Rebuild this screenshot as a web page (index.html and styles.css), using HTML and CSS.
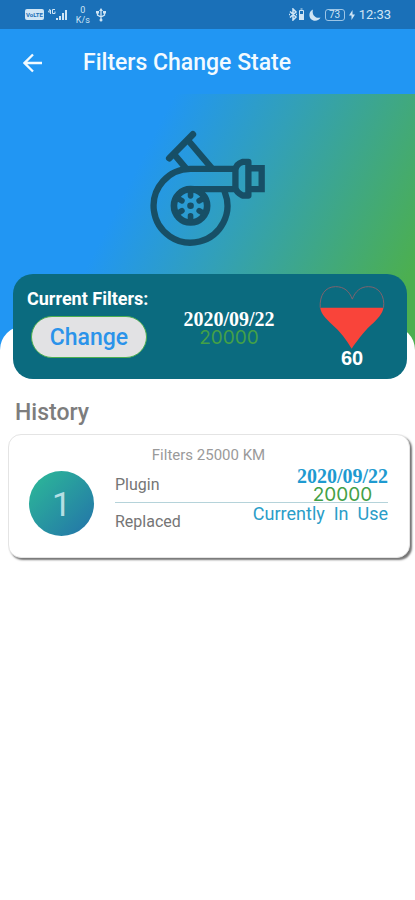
FILE: index.html
```html
<!DOCTYPE html>
<html lang="en">
<head>
<meta charset="utf-8">
<meta name="viewport" content="width=device-width, initial-scale=1">
<title>Filters Change State</title>
<link rel="stylesheet" href="styles.css">
</head>
<body>
<div class="status">
  <div class="status-group">
    <span class="volte">VoLTE</span>
    <svg class="signal" viewBox="0 0 20 13" width="20" height="13" aria-hidden="true">
      <path d="M2 1L0.500 4H3M2.500 2V6M7 1.500H4.500V5.500H7V3.500" fill="none" stroke="currentColor"/>
      <path d="M8 12V10H10V12ZM11 12V8H13V12ZM14 12V5H16V12ZM17 12V2H19V12Z" fill="currentColor"/>
    </svg>
    <span class="speed"><span>0</span><span>K/s</span></span>
    <svg class="usb" viewBox="0 0 10 14" width="10" height="14" aria-hidden="true">
      <path d="M5 2V12M1.500 4V7L5 9L8.500 7V4" fill="none" stroke="currentColor" stroke-width="1.300"/>
      <path d="M5 0L7 3H3ZM0 3H3V5.500H0ZM7 3H10V5.500H7Z" fill="currentColor"/><circle cx="5" cy="12" r="1.500" fill="currentColor"/>
    </svg>
  </div>
  <div class="status-group right">
    <svg viewBox="0 0 17 13" width="17" height="13" aria-hidden="true">
      <path d="M2 3.500L8 9L5 12V1L8 4L2 9.500M1 6.500H2M8 6.500H9" fill="none" stroke="currentColor" stroke-width="1.500"/>
      <path d="M11.500 2.500H15.500V11.500H11.500ZM12.500 1H14.500" fill="none" stroke="currentColor"/><path d="M11 6H16V12H11Z" fill="currentColor"/>
    </svg>
    <svg viewBox="0 0 12 12" width="12" height="12" aria-hidden="true">
      <path d="M4 0.500C-0.500 2.500 -0.500 8 2.500 10.500C5.500 13 10.500 11.500 11.500 8.500C6.500 10 2.500 5.500 4 0.500Z" fill="currentColor"/>
    </svg>
    <span class="battery">73</span>
    <svg viewBox="0 0 6 10" width="6" height="10" aria-hidden="true"><path d="M3.500 0L0 5.500H2.500V10L6 4.500H3.500Z" fill="currentColor"/></svg>
    <time>12:33</time>
  </div>
</div>

<header class="appbar">
  <button class="back" type="button" aria-label="Back">
    <svg viewBox="0 0 20 20" width="20" height="20" aria-hidden="true"><path d="M19 10H2M10 1.500L1.500 10L10 18.500" fill="none" stroke="currentColor" stroke-width="2.300"/></svg>
  </button>
  <h1>Filters Change State</h1>
</header>

<div class="hero">
  <svg class="turbo" viewBox="28 30 352 352" width="117" height="117" aria-hidden="true">
    <g fill="none" stroke="currentColor" stroke-width="19" stroke-linecap="round" stroke-linejoin="round">
      <path d="M283 147H153A111 111 0 1 0 256 217"/>
      <path d="M153 208H283"/>
      <path d="M89 115L160 43" stroke-width="20"/>
      <path d="M148 64L216 144M108 108L138 144"/>
      <path d="M309 126H327V227H309Q290 217 288 204V150Q290 132 309 126Z"/>
      <path d="M334 145H367V208H334" stroke-linejoin="miter"/>
    </g>
    <circle cx="153" cy="258" r="50" fill="none" stroke="currentColor" stroke-width="20"/>
    <g stroke="currentColor" stroke-width="17" stroke-linecap="round">
      <path d="M153 228V214M153 288V302M179 243L191 236M179 273L191 280M127 243L115 236M127 273L115 280"/>
    </g>
    <circle cx="153" cy="258" r="10" fill="currentColor"/>
  </svg>
</div>

<main class="sheet">
  <section class="current">
    <div class="current-action">
      <h2>Current Filters:</h2>
      <button class="change" type="button">Change</button>
    </div>
    <div class="current-reading">
      <time class="date">2020/09/22</time>
      <span class="odometer">20000</span>
    </div>
    <div class="health">
      <svg viewBox="340 80 200 192" width="66" height="63" aria-hidden="true">
        <path d="M343 146H536C533 164 518 181 498 199C471 224 455 249 439 271C422 243 404 219 380 198C360 178 346 166 343 146Z" fill="#f9443a"/>
        <path d="M343 146C341 108 358 82 390 82C416 82 432 96 441 120C450 96 466 82 490 82C522 82 541 110 536 146" fill="none" stroke="#80636d" stroke-width="3"/>
      </svg>
      <span class="score">60</span>
    </div>
  </section>

  <h2 class="section-title">History</h2>
  <article class="entry">
    <h3>Filters 25000 KM</h3>
    <div class="entry-body">
      <span class="badge">1</span>
      <dl>
        <div class="row">
          <dt>Plugin</dt>
          <dd class="reading"><time class="date">2020/09/22</time><span class="odometer">20000</span></dd>
        </div>
        <div class="row">
          <dt>Replaced</dt>
          <dd class="state">Currently&nbsp; In&nbsp; Use</dd>
        </div>
      </dl>
    </div>
  </article>
</main>
</body>
</html>
```
FILE: styles.css
```css
* {
  box-sizing: border-box;
}

body {
  min-height: 100vh;
  margin: 0;
  background: #fff;
  color: #757575;
  font-family: Roboto, sans-serif;
}

h1, h2, h3, dl, dd {
  margin: 0;
}

svg {
  display: block;
}

.status {
  display: flex;
  justify-content: space-between;
  height: 29px;
  padding: 0 24px 0 25px;
  background: #1a70b8;
  color: #cfe5f5;
}

.status-group {
  display: flex;
  align-items: center;
  gap: 4px;
}

.volte {
  padding: 0 1px;
  border-radius: 2px;
  background: #cfe5f5;
  color: #1a70b8;
  font-size: 6px;
  font-weight: 700;
  line-height: 11px;
}

.speed {
  display: flex;
  flex-direction: column;
  margin: 0 2px 0 4px;
  font-size: 9px;
  line-height: 10px;
  text-align: center;
}

.right time {
  font-size: 13px;
}

.battery {
  width: 20px;
  border: 1px solid #9cc5e6;
  border-radius: 3px;
  font-size: 10px;
  line-height: 10px;
  text-align: center;
}

.appbar {
  display: flex;
  align-items: center;
  gap: 40px;
  height: 65px;
  padding: 2px 23px 0;
  background: #2196f3;
  color: #f2faff;
}

.back {
  padding: 0;
  border: 0;
  background: none;
  color: inherit;
}

.appbar h1 {
  font-size: 23px;
  font-weight: 500;
}

.hero {
  display: flex;
  justify-content: center;
  height: 256px;
  padding-top: 36px;
  background: linear-gradient(117deg, #2196f3 32%, #32a0b8 55%, #4caf50 92%);
  color: #174f66;
}

.sheet {
  display: flex;
  flex-direction: column;
  margin-top: -24px;
  padding-bottom: 24px;
  border-radius: 24px 24px 0 0;
  background: #fff;
}

.current {
  display: flex;
  gap: 35px;
  min-height: 105px;
  margin: -52px 8px 0 13px;
  padding: 12px 22px 8px 14px;
  border-radius: 20px;
  background: #0b6b7f;
  color: #fff;
}

.current h2 {
  padding-top: 2px;
  font-size: 18px;
  font-weight: 700;
  line-height: 22px;
}

.change {
  width: 116px;
  height: 42px;
  margin: 6px 0 0 4px;
  padding: 0;
  border: 1px solid #4caf50;
  border-radius: 21px;
  background: #e2e2e4;
  color: #2b93ea;
  font: 500 23px Roboto, sans-serif;
}

.current-reading,
.reading {
  display: flex;
  flex-direction: column;
  align-items: center;
}

.current-reading {
  padding-top: 24px;
}

.date {
  font-family: "Liberation Serif", serif;
  font-size: 20px;
  font-weight: 700;
  line-height: 18px;
}

.odometer {
  color: #43a047;
  font-family: Inter, sans-serif;
  font-size: 19px;
  font-weight: 400;
  line-height: 20px;
}

.health {
  display: flex;
  flex-direction: column;
  align-items: center;
  margin-left: auto;
}

.score {
  font-family: "Liberation Sans", sans-serif;
  font-size: 20px;
  font-weight: 700;
  line-height: 18px;
}

.section-title {
  margin: 20px 15px 7px;
  color: #7d7d7d;
  font-size: 23px;
  font-weight: 500;
  line-height: 28px;
}

.entry {
  min-height: 124px;
  margin: 0 5px 0 8px;
  padding: 11px 21px 20px 20px;
  border: 1px solid #e4e4e4;
  border-radius: 13px;
  background: #fff;
  box-shadow: 2px 2px 2px 0 #757575;
}

.entry h3 {
  color: #9a9a9a;
  font-size: 15px;
  font-weight: 400;
  line-height: 18px;
  text-align: center;
}

.entry-body {
  display: flex;
  gap: 21px;
}

.badge {
  display: flex;
  flex: none;
  align-items: center;
  justify-content: center;
  width: 65px;
  height: 65px;
  margin-top: 7px;
  border-radius: 50%;
  background: linear-gradient(135deg, #2bb09a 15%, #2479a8 90%);
  color: #b5dfe4;
  font-size: 34px;
}

.entry dl {
  flex: 1;
}

.row {
  display: flex;
  justify-content: space-between;
}

.row + .row {
  border-top: 1px solid #b5d3da;
}

.row dt {
  padding-top: 12px;
  font-size: 16px;
  line-height: 18px;
}

.row + .row dt {
  padding-top: 10px;
}

.reading {
  height: 38px;
  padding-top: 3px;
  color: #1e9ad0;
}

.state {
  color: #2a9dc8;
  font-size: 18px;
  line-height: 22px;
}
```
